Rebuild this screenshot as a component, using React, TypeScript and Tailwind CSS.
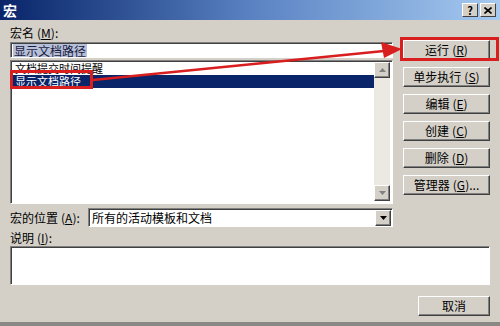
import type { ReactNode } from 'react'

const font = { fontFamily: '"Noto Sans CJK SC", "DejaVu Sans", sans-serif' }

function Btn({ children, className = '' }: { children: ReactNode; className?: string }) {
  return (
    <div
      className={`h-[20px] flex items-center justify-center text-[12px] text-black bg-[#d4d0c8] border border-t-white border-l-white border-r-[#404040] border-b-[#404040] shadow-[inset_-1px_-1px_#808080] ${className}`}
    >
      {children}
    </div>
  )
}

function Key({ k }: { k: string }) {
  return (
    <span className="ml-[3px]">
      (<span className="underline">{k}</span>)
    </span>
  )
}

function ArrowBtn({ dir, dim }: { dir: 'up' | 'down'; dim?: boolean }) {
  return (
    <div className="w-[16px] h-[16px] bg-[#d4d0c8] border border-t-white border-l-white border-r-[#404040] border-b-[#404040] shadow-[inset_-1px_-1px_#808080] flex items-center justify-center">
      <svg width="7" height="4" viewBox="0 0 7 4">
        {dir === 'up' ? (
          <path d="M3.5 0 L7 4 L0 4 Z" fill={dim ? '#808080' : '#000'} />
        ) : (
          <path d="M0 0 L7 0 L3.5 4 Z" fill={dim ? '#808080' : '#000'} />
        )}
      </svg>
    </div>
  )
}

const sunken =
  'bg-white border border-t-[#808080] border-l-[#808080] border-r-white border-b-white shadow-[inset_1px_1px_#404040]'

export default function App() {
  return (
    <div className="relative w-[500px] h-[326px] bg-[#d4d0c8] flex flex-col overflow-hidden border-b-[4px] border-[#8a8884]" style={font}>
      {/* Title bar */}
      <div className="h-[20px] flex items-center justify-between pl-[3px] pr-[4px] bg-gradient-to-r from-[#0a246a] via-[#5a82c2] to-[#a6caf0]">
        <span className="text-white font-bold text-[14px] leading-none">宏</span>
        <div className="flex gap-[2px]">
          <div className="w-[16px] h-[14px] bg-[#d4d0c8] border border-t-white border-l-white border-r-[#404040] border-b-[#404040] flex items-center justify-center text-[11px] font-bold leading-none">?</div>
          <div className="w-[16px] h-[14px] bg-[#d4d0c8] border border-t-white border-l-white border-r-[#404040] border-b-[#404040] flex items-center justify-center">
            <svg width="8" height="7" viewBox="0 0 8 7">
              <path d="M0.5 0.5 L7.5 6.5 M7.5 0.5 L0.5 6.5" stroke="#000" strokeWidth="1.6" />
            </svg>
          </div>
        </div>
      </div>

      <div className="flex-1 flex flex-col px-[10px]">
        <div className="flex gap-[10px]">
          {/* Left column */}
          <div className="w-[383px] flex flex-col">
            <div className="h-[22px] pt-[6px] text-[12px] leading-[14px]">
              宏名<Key k="M" />:
            </div>
            <div className={`h-[16px] ${sunken} flex items-center pl-[2px]`}>
              <span className="bg-[#b6c0d8] text-[12px] leading-[13px] text-[#1a1a40] px-[1px]">显示文档路径</span>
            </div>
            <div className={`mt-[2px] h-[144px] ${sunken} flex pt-[1px] pl-[2px] pr-[2px] pb-[2px]`}>
              <div className="flex-1 flex flex-col text-[11px]">
                <div className="h-[13px] pl-[2px] leading-[13px]">文档提交时间提醒</div>
                <div className="h-[13px] pl-[2px] leading-[13px] bg-[#0a246a] text-white">显示文档路径</div>
              </div>
              <div className="w-[16px] flex flex-col justify-between bg-[#ece9e2]">
                <ArrowBtn dir="up" dim />
                <ArrowBtn dir="down" dim />
              </div>
            </div>
          </div>

          {/* Right buttons */}
          <div className="w-[87px] flex flex-col gap-[7px] pt-[20px]">
            <Btn>运行<Key k="R" /></Btn>
            <Btn>单步执行<Key k="S" /></Btn>
            <Btn>编辑<Key k="E" /></Btn>
            <Btn>创建<Key k="C" /></Btn>
            <Btn>删除<Key k="D" /></Btn>
            <Btn>管理器<Key k="G" />...</Btn>
          </div>
        </div>

        {/* Location */}
        <div className="mt-[4px] w-[383px] flex items-center">
          <span className="w-[78px] text-[12px] leading-none">
            宏的位置<Key k="A" />:
          </span>
          <div className={`flex-1 h-[19px] ${sunken} flex items-center justify-between pl-[3px] pr-[1px]`}>
            <span className="text-[12px] leading-none">所有的活动模板和文档</span>
            <ArrowBtn dir="down" />
          </div>
        </div>

        {/* Description */}
        <div className="mt-[3px] h-[16px] text-[12px] leading-[16px]">
          说明<Key k="I" />:
        </div>
        <div className={`h-[39px] ${sunken}`} />

        <div className="mt-[11px] flex justify-end">
          <Btn className="w-[72px]">取消</Btn>
        </div>
      </div>

      {/* Red annotations */}
      <div className="absolute left-[10px] top-[70px] w-[83px] h-[19px] border-[3px] border-[#d81e1e]" />
      <div className="absolute left-[400px] top-[37px] w-[99px] h-[24px] border-[3px] border-[#d81e1e]" />
      <svg className="absolute left-0 top-0 pointer-events-none" width="500" height="326">
        <line x1="93" y1="80" x2="384" y2="51" stroke="#d81e1e" strokeWidth="2.5" />
        <path d="M402 49 L381 42 L384 58 Z" fill="#d81e1e" />
      </svg>
    </div>
  )
}
